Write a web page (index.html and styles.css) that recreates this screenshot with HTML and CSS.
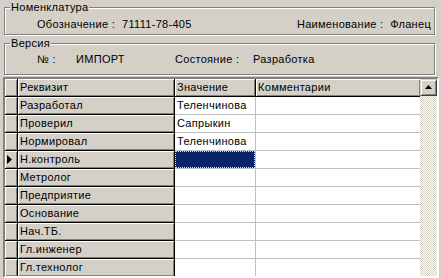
FILE: index.html
```html
<!DOCTYPE html>
<html lang="ru">
<head>
  <meta charset="UTF-8" />
  <title>Реквизиты документа</title>
  <link rel="stylesheet" href="styles.css">
</head>
<body>
  <fieldset class="group group-nom">
    <legend>Номенклатура</legend>
    <div class="group-row">
      <span class="lbl lbl-code">Обозначение :</span>
      <span>71111-78-405</span>
      <span class="right-field">Наименование :&nbsp;&nbsp;Фланец</span>
    </div>
  </fieldset>

  <fieldset class="group group-ver">
    <legend>Версия</legend>
    <div class="group-row">
      <span class="lbl lbl-num">№ :</span>
      <span class="val-num">ИМПОРТ</span>
      <span class="lbl lbl-state">Состояние :</span>
      <span>Разработка</span>
    </div>
  </fieldset>

  <div class="grid">
    <div class="grid-cells">
      <div class="row">
        <div class="cell fixed ind"></div>
        <div class="cell fixed req">Реквизит</div>
        <div class="cell fixed val">Значение</div>
        <div class="cell fixed com">Комментарии</div>
      </div>
      <div class="row">
        <div class="cell fixed ind"></div>
        <div class="cell fixed req">Разработал</div>
        <div class="cell val">Теленчинова</div>
        <div class="cell com"></div>
      </div>
      <div class="row">
        <div class="cell fixed ind"></div>
        <div class="cell fixed req">Проверил</div>
        <div class="cell val">Сапрыкин</div>
        <div class="cell com"></div>
      </div>
      <div class="row">
        <div class="cell fixed ind"></div>
        <div class="cell fixed req">Нормировал</div>
        <div class="cell val">Теленчинова</div>
        <div class="cell com"></div>
      </div>
      <div class="row">
        <div class="cell fixed ind">
          <svg class="row-arrow" width="5" height="9" viewBox="0 0 5 9"><polygon points="0,0 5,4.5 0,9" fill="#000"/></svg>
        </div>
        <div class="cell fixed req">Н.контроль</div>
        <div class="cell val selected"><div class="focus"></div></div>
        <div class="cell com"></div>
      </div>
      <div class="row">
        <div class="cell fixed ind"></div>
        <div class="cell fixed req">Метролог</div>
        <div class="cell val"></div>
        <div class="cell com"></div>
      </div>
      <div class="row">
        <div class="cell fixed ind"></div>
        <div class="cell fixed req">Предприятие</div>
        <div class="cell val"></div>
        <div class="cell com"></div>
      </div>
      <div class="row">
        <div class="cell fixed ind"></div>
        <div class="cell fixed req">Основание</div>
        <div class="cell val"></div>
        <div class="cell com"></div>
      </div>
      <div class="row">
        <div class="cell fixed ind"></div>
        <div class="cell fixed req">Нач.ТБ.</div>
        <div class="cell val"></div>
        <div class="cell com"></div>
      </div>
      <div class="row">
        <div class="cell fixed ind"></div>
        <div class="cell fixed req">Гл.инженер</div>
        <div class="cell val"></div>
        <div class="cell com"></div>
      </div>
      <div class="row">
        <div class="cell fixed ind"></div>
        <div class="cell fixed req">Гл.технолог</div>
        <div class="cell val"></div>
        <div class="cell com"></div>
      </div>
    </div>

    <div class="scrollbar">
      <div class="sb-btn">
        <svg width="7" height="4" viewBox="0 0 7 4"><polygon points="3.5,0 7,4 0,4" fill="#000"/></svg>
      </div>
      <div class="sb-track"></div>
    </div>
  </div>
</body>
</html>
```

FILE: styles.css
```css
html, body {
  height: 100%;
}

body {
  margin: 0;
  padding-top: 1px;
  background: #d4d0c8;
  font-family: 'Liberation Sans', Arial, sans-serif;
  font-size: 11px;
  letter-spacing: 0.3px;
  color: #000;
  overflow: hidden;
  box-sizing: border-box;
}

.group {
  margin: 0 6px 0 4px;
  padding: 0;
  min-width: 0;
  border: 1px solid #808080;
  box-shadow: 1px 1px 0 #fff, inset 1px 1px 0 #fff;
}

.group legend {
  margin-left: 5px;
  padding: 0 1px;
  line-height: 13px;
  background: #d4d0c8;
}

.group-row {
  display: flex;
  line-height: 13px;
  padding-left: 32px;
  white-space: nowrap;
}

.group-nom .group-row {
  padding-top: 4px;
  padding-bottom: 3px;
}

.group-ver {
  margin-top: 2px;
}

.group-ver .group-row {
  padding-top: 3px;
  padding-bottom: 8px;
}

.lbl-code {
  margin-right: 7px;
}

.right-field {
  margin-left: auto;
  padding-right: 3px;
}

.lbl-num {
  width: 39px;
}

.val-num {
  width: 99px;
}

.lbl-state {
  width: 78px;
}

/* string grid */
.grid {
  display: flex;
  margin: 2px 0 0 3px;
  width: 436px;
  height: 201px;
  box-sizing: border-box;
  border: 2px solid;
  border-color: #808080 #fff #fff #808080;
  box-shadow: inset 1px 1px 0 #404040;
  overflow: hidden;
}

.grid-cells {
  width: 415px;
}

.row {
  display: flex;
  height: 18px;
}

.cell {
  box-sizing: border-box;
  height: 18px;
  line-height: 17px;
  padding-left: 2px;
  white-space: nowrap;
  overflow: hidden;
  background: #fff;
  border-right: 1px solid #c0c0c0;
  border-bottom: 1px solid #c0c0c0;
}

.cell.fixed {
  background: #d4d0c8;
  border-color: #000;
  box-shadow: inset 1px 1px 0 #fff, inset -1px -1px 0 #808080;
}

.ind {
  width: 13px;
  padding-left: 0;
}

.req {
  width: 157px;
}

.val {
  width: 81px;
}

.com {
  width: 164px;
  border-right: none;
}

.cell.fixed.com {
  border-right: none;
}

.row-arrow {
  display: block;
  margin: 4px 0 0 2px;
}

.cell.selected {
  padding: 0;
}

.focus {
  height: 100%;
  box-sizing: border-box;
  background: #0a246a;
  border: 1px dotted #f5db95;
}

/* vertical scrollbar */
.scrollbar {
  width: 17px;
  display: flex;
  flex-direction: column;
}

.sb-btn {
  height: 17px;
  box-sizing: border-box;
  display: flex;
  align-items: center;
  justify-content: center;
  background: #d4d0c8;
  border: 1px solid;
  border-color: #d4d0c8 #404040 #404040 #d4d0c8;
  box-shadow: inset 1px 1px 0 #fff, inset -1px -1px 0 #808080;
}

.sb-btn svg {
  display: block;
  margin-top: -1px;
}

.sb-track {
  flex: 1;
  background: repeating-conic-gradient(#fff 0 25%, #d4d0c8 0 50%) 0 0 / 2px 2px;
}
```
